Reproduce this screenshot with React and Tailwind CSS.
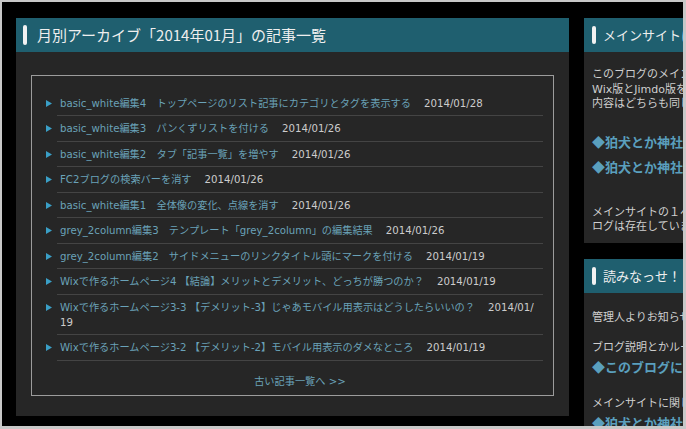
import React from "react";

const rows = [
  { t: "basic_white編集4　トップページのリスト記事にカテゴリとタグを表示する", d: "2014/01/28" },
  { t: "basic_white編集3　パンくずリストを付ける", d: "2014/01/26" },
  { t: "basic_white編集2　タブ「記事一覧」を増やす", d: "2014/01/26" },
  { t: "FC2ブログの検索バーを消す", d: "2014/01/26" },
  { t: "basic_white編集1　全体像の変化、点線を消す", d: "2014/01/26" },
  { t: "grey_2column編集3　テンプレート「grey_2column」の編集結果", d: "2014/01/26" },
  { t: "grey_2column編集2　サイドメニューのリンクタイトル頭にマークを付ける", d: "2014/01/19" },
  { t: "Wixで作るホームページ4 【結論】メリットとデメリット、どっちが勝つのか？", d: "2014/01/19" },
  { t: "Wixで作るホームページ3-3 【デメリット-3】じゃあモバイル用表示はどうしたらいいの？", d: "2014/01/19", wrap: true },
  { t: "Wixで作るホームページ3-2 【デメリット-2】モバイル用表示のダメなところ", d: "2014/01/19" },
];

const cjk = { fontFamily: '"Noto Sans CJK JP", "Noto Sans", sans-serif' };
const mixed = { fontFamily: '"DejaVu Sans", "Noto Sans CJK JP", sans-serif' };

function Marker() {
  return (
    <span className="w-[11px] shrink-0 flex pt-[9px]">
      <svg width="6" height="7" viewBox="0 0 6 7">
        <polygon points="0,0 6,3.5 0,7" fill="#3a9fc6" />
      </svg>
    </span>
  );
}

function MainHeader({ children }) {
  return (
    <div className="h-[34px] bg-[#1f5f6f] flex items-center pl-[7px]" style={cjk}>
      <span className="w-[4px] h-[20px] rounded-[2px] bg-[#f2f2f2] mr-[10px] shrink-0" />
      <span className="text-[15px] leading-[20px] text-[#eeeeee] whitespace-nowrap">{children}</span>
    </div>
  );
}

function SideHeader({ children }) {
  return (
    <div className="h-[34px] bg-[#1f5f6f] flex items-center pl-[8px]" style={cjk}>
      <span className="w-[4px] h-[18px] rounded-[2px] bg-[#f2f2f2] mr-[7px] shrink-0" />
      <span className="text-[13px] leading-[18px] text-[#eeeeee] whitespace-nowrap">{children}</span>
    </div>
  );
}

export default function App() {
  return (
    <div className="w-[686px] h-[429px] overflow-hidden border-2 border-r-[3px] border-b-[3px] border-[#c8c8c8] bg-black">
      <div className="flex pl-[14px] pt-[16px] gap-[15px]">
        {/* main panel */}
        <div className="w-[553px] h-[398px] shrink-0 bg-[#262626] flex flex-col">
          <MainHeader>月別アーカイブ「2014年01月」の記事一覧</MainHeader>
          <div className="px-[15px] pt-[23px]" style={mixed}>
            <div className="h-[321px] border border-[#9c9c9c] pt-[14.5px] pl-[14px] pr-[10px]">
              <ul className="text-[10.2px] leading-[15px]">
                {rows.map((r, i) => (
                  <li key={i} className="flex">
                    <Marker />
                    <div className="flex-1 border-b border-[#444444] pl-[3px] pt-[5px] pb-[4.5px]">
                      <span className="text-[#6aa2b8]">{r.t}</span>
                      <span className="text-[#cccccc] pl-[13px]">
                        {r.wrap ? (
                          <>
                            2014/01/
                            <br />
                            19
                          </>
                        ) : (
                          r.d
                        )}
                      </span>
                    </div>
                  </li>
                ))}
              </ul>
              <div className="pl-[11px] mt-[13.5px] text-center text-[10.2px] leading-[15px] text-[#6aa2b8]">
                古い記事一覧へ &gt;&gt;
              </div>
            </div>
          </div>
        </div>

        {/* sidebar */}
        <div className="w-[230px] shrink-0 flex flex-col gap-[16px]">
          <div className="bg-[#262626] pb-[8.5px]">
            <SideHeader>メインサイトについて</SideHeader>
            <div className="px-[8px] text-[11px] text-[#cfcfcf] whitespace-nowrap" style={mixed}>
              <p className="pt-[16px] leading-[14.5px]">
                このブログのメインサイトは2つあります。
                <br />
                Wix版とJimdo版を作っています。
                <br />
                内容はどちらも同じです。
              </p>
              <p className="mt-[21.5px] text-[13px] leading-[18px] font-bold text-[#5a9fbd]" style={cjk}>◆狛犬とか神社の写真館（Wix版）</p>
              <p className="mt-[7px] text-[13px] leading-[18px] font-bold text-[#5a9fbd]" style={cjk}>◆狛犬とか神社の写真館（Jimdo版）</p>
              <p className="mt-[29.75px] leading-[14.5px]">
                メインサイトの１ページとしてのブ
                <br />
                ログは存在していません。
              </p>
            </div>
          </div>
          <div className="bg-[#262626] flex-1 h-[200px]">
            <SideHeader>読みなっせ！</SideHeader>
            <div className="px-[8px] text-[11px] text-[#cfcfcf] whitespace-nowrap" style={mixed}>
              <p className="pt-[17.75px] leading-[14.5px]">管理人よりお知らせ</p>
              <p className="mt-[15.5px] leading-[14.5px]">ブログ説明とかルールとか</p>
              <p className="mt-[2px] text-[13px] leading-[18px] font-bold text-[#5a9fbd]" style={cjk}>◆このブログについて</p>
              <p className="mt-[21.75px] leading-[14.5px]">メインサイトに関して</p>
              <p className="mt-[1.75px] text-[13px] leading-[18px] font-bold text-[#5a9fbd]" style={cjk}>◆狛犬とか神社の写真館</p>
            </div>
          </div>
        </div>
      </div>
    </div>
  );
}
